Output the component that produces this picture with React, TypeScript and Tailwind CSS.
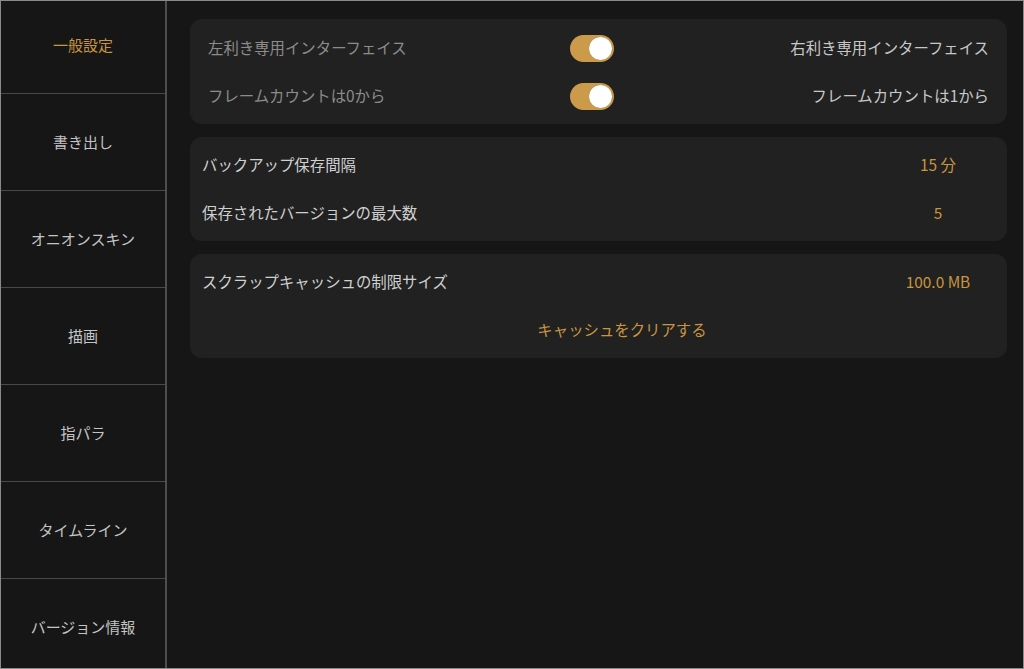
const menu = ["一般設定", "書き出し", "オニオンスキン", "描画", "指パラ", "タイムライン", "バージョン情報"];

function Toggle() {
  return (
    <div className="flex h-[27px] w-[44px] items-center justify-end rounded-full bg-[#cc9a4b] px-[1px]">
      <div className="h-[25px] w-[25px] rounded-full border border-[#b98a3e] bg-white" />
    </div>
  );
}

function ValueRow({ label, value }: { label: string; value: string }) {
  return (
    <div className="flex h-[48px] items-center pl-[12px] pr-[19px]">
      <span className="flex-1 text-[#d0d0d0]">{label}</span>
      <span className="w-[100px] text-center text-[#c9953f]">{value}</span>
    </div>
  );
}

export default function App() {
  return (
    <div
      className="flex h-[669px] w-[1024px] overflow-hidden border border-[#8a8a8a] bg-[#161616] text-[15.4px]"
      style={{ fontFamily: '"Noto Sans CJK JP", "Noto Sans", sans-serif' }}
    >
      <div className="w-[166px] shrink-0 overflow-hidden border-r-2 border-[#4e4e4e] bg-[#161616] text-[15px]">
        <div className="-mt-[4px]">
          {menu.map((m, i) => (
            <div
              key={m}
              className={
                "flex h-[97px] items-center justify-center border-b border-[#4a4a4a] " +
                (i === 0 ? "text-[#c9953f]" : "text-[#c4c4c4]")
              }
            >
              {m}
            </div>
          ))}
        </div>
      </div>

      <div className="flex flex-1 flex-col gap-[13px] pl-[23px] pr-[16px] pt-[18px]">
        <div className="h-[105px] rounded-[12px] bg-[#212121] px-[18px] pt-[5px]">
          <div className="flex h-[48px] items-center">
            <span className="flex-1 text-[#8c8c8c]">左利き専用インターフェイス</span>
            <div className="mr-[14px]">
              <Toggle />
            </div>
            <span className="flex-1 text-right text-[#c8c8c8]">右利き専用インターフェイス</span>
          </div>
          <div className="flex h-[48px] items-center">
            <span className="flex-1 text-[#8c8c8c]">フレームカウントは0から</span>
            <div className="mr-[14px]">
              <Toggle />
            </div>
            <span className="flex-1 text-right text-[#c8c8c8]">フレームカウントは1から</span>
          </div>
        </div>

        <div className="h-[104px] rounded-[12px] bg-[#212121] pt-[4px]">
          <ValueRow label="バックアップ保存間隔" value="15 分" />
          <ValueRow label="保存されたバージョンの最大数" value="5" />
        </div>

        <div className="h-[104px] rounded-[12px] bg-[#212121] pt-[4px]">
          <ValueRow label="スクラップキャッシュの制限サイズ" value="100.0 MB" />
          <div className="flex h-[48px] items-center justify-center pl-[47px] text-[#c9953f]">
            キャッシュをクリアする
          </div>
        </div>
      </div>
    </div>
  );
}
